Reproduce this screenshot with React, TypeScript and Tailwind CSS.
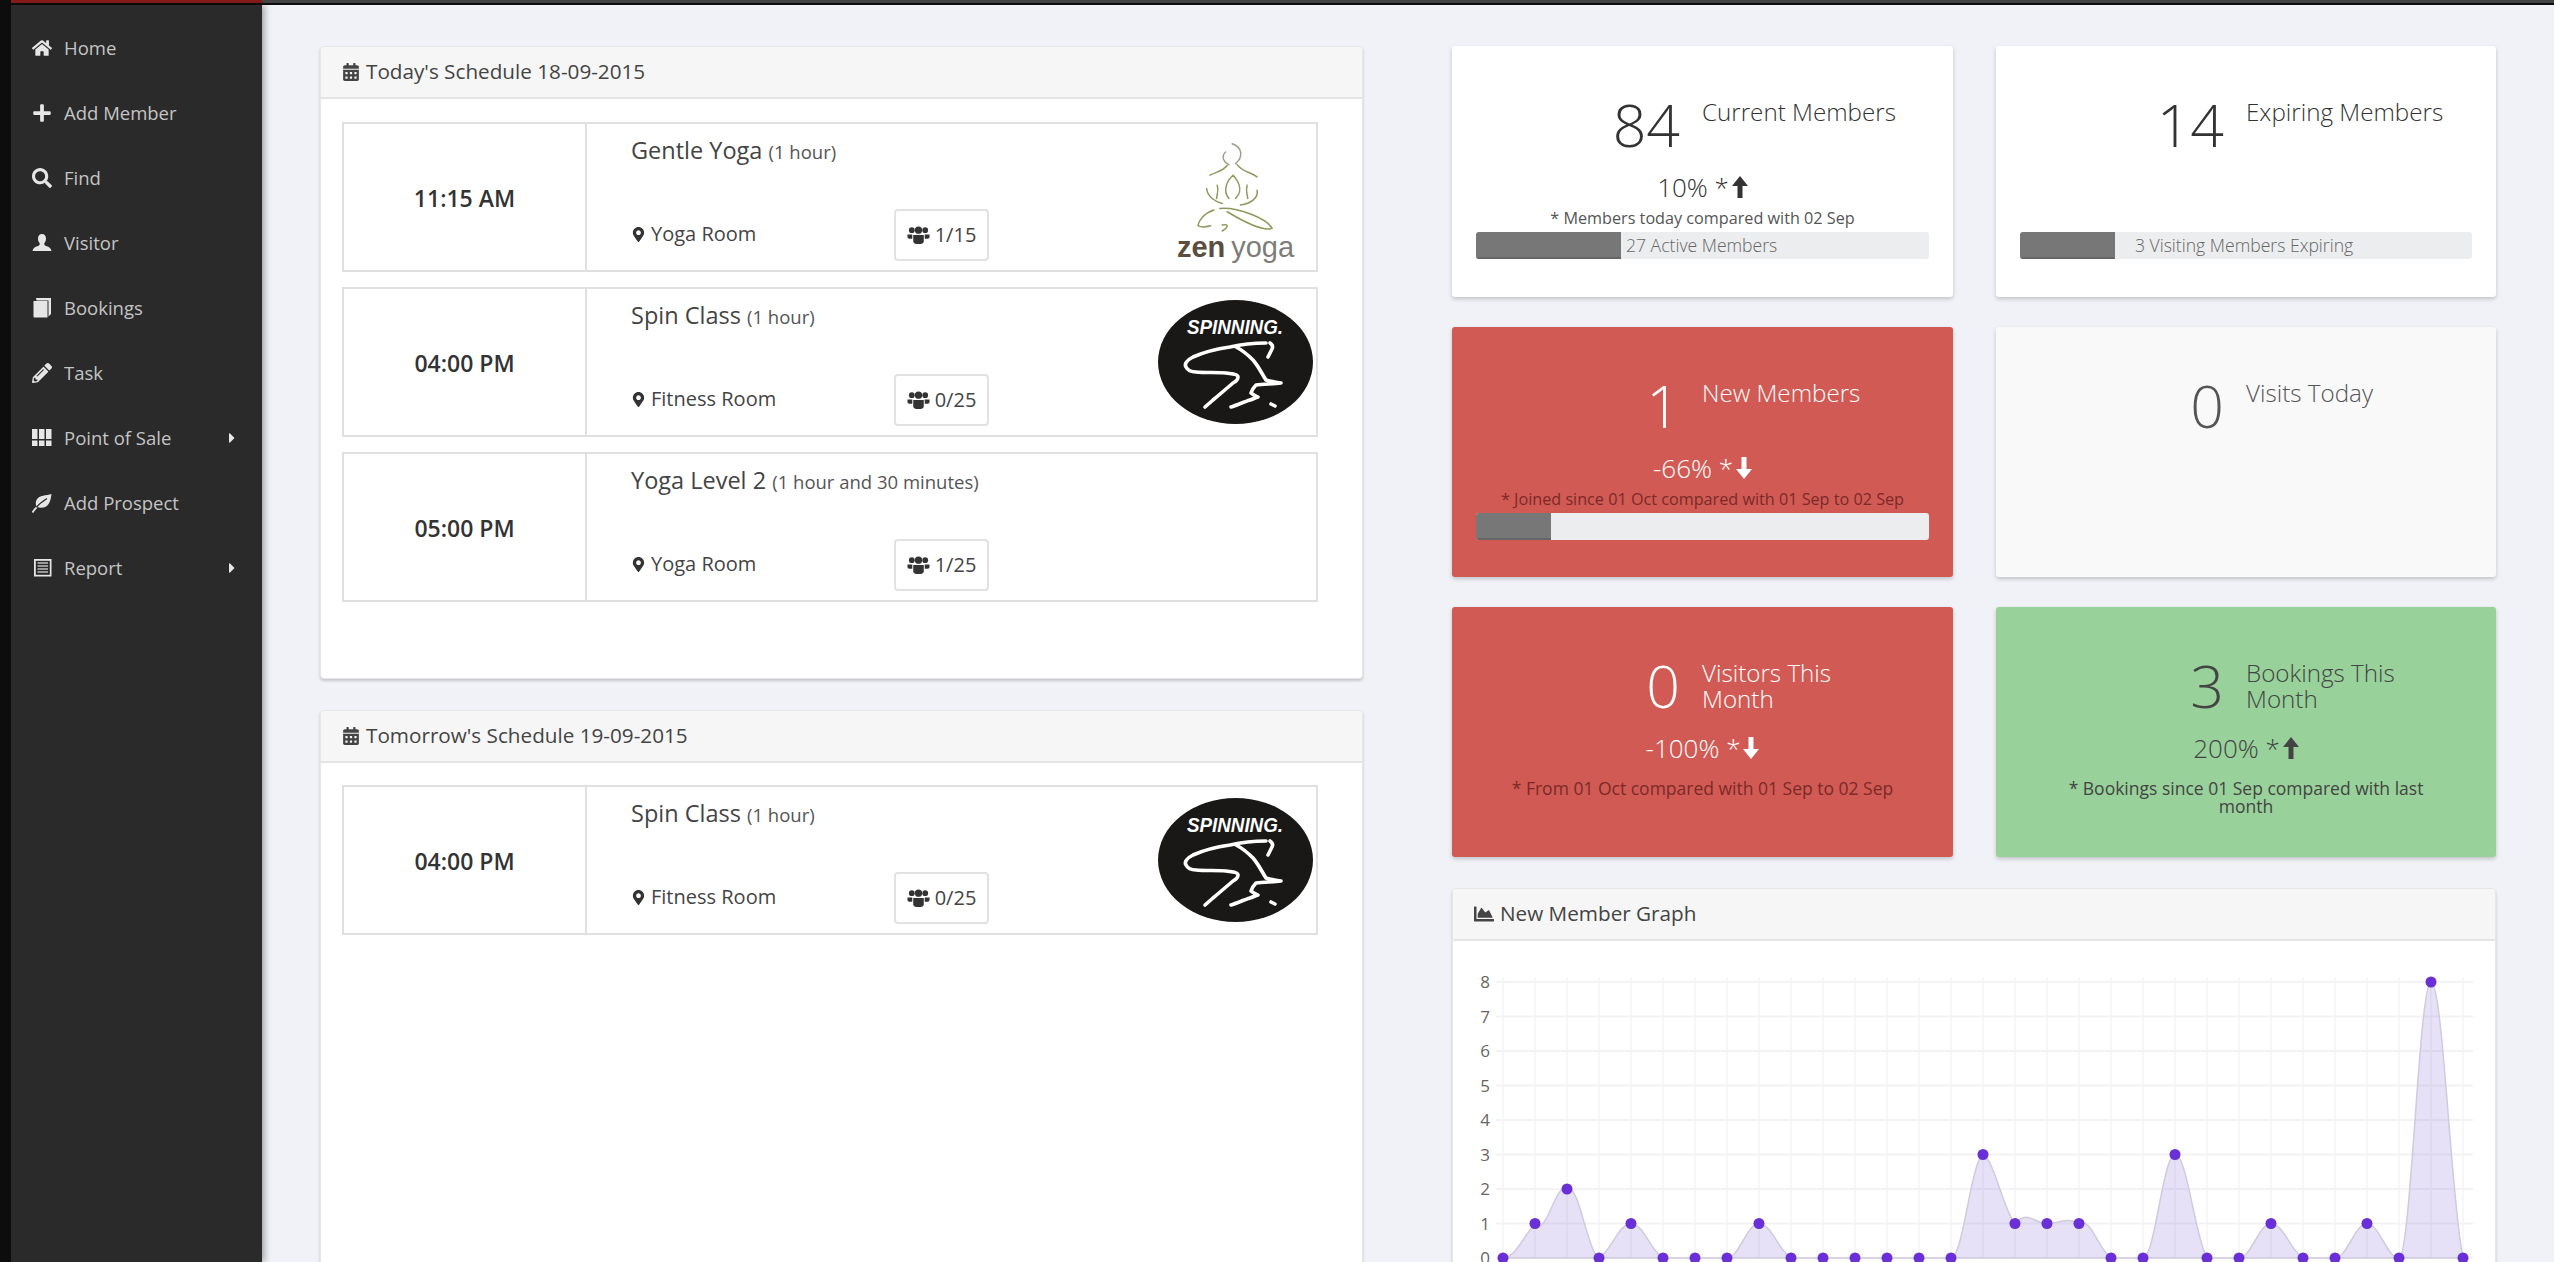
import type { ReactNode } from "react";
import { FaCalendarAlt, FaCaretRight, FaChartArea, FaHome, FaMapMarkerAlt, FaPencilAlt, FaPlus, FaSearch } from "react-icons/fa";

function UserIcon() {
  return (
    <svg viewBox="0 0 20 20" className="h-[20px] w-[20px] fill-current">
      <path d="M10 1C7.4 1 6 3 6 5.6 6 8 7 9.6 7.8 10.4 7.8 12 7 12.6 5 13.3 2.6 14.2 1 15.2 0.5 18H19.5C19 15.2 17.4 14.2 15 13.3 13 12.6 12.2 12 12.2 10.4 13 9.6 14 8 14 5.6 14 3 12.6 1 10 1Z" />
    </svg>
  );
}

function BookIcon() {
  return (
    <svg viewBox="0 0 20 20" className="h-[20px] w-[20px] fill-current">
      <path d="M4 0H19V16L16.5 18.5V2.5H4.5Z" />
      <path d="M1.5 3H15.5V19.5H2.5C1.9 19.5 1.5 19 1.5 18.5Z" />
    </svg>
  );
}

function GridIcon() {
  return (
    <svg viewBox="0 0 20 20" className="h-[20px] w-[20px] fill-current">
      <path d="M0 1H5.5V11H0ZM7 1H12.5V11H7ZM14 1H19.5V11H14ZM0 12.5H5.5V18H0ZM7 12.5H12.5V18H7ZM14 12.5H19.5V18H14Z" />
    </svg>
  );
}

function LeafIcon() {
  return (
    <svg viewBox="0 0 20 20" className="h-[20px] w-[20px]">
      <path d="M19.5 1C14 3 7.5 1.5 4.5 7 3.4 9.4 3.6 12 4.8 14 9 15.5 14 15 16.6 11 18.6 8 19 4.5 19.5 1Z" fill="currentColor" />
      <path d="M0.5 19C4 14 9 9 15 5.5" fill="none" stroke="#2a2a2a" strokeWidth="1.2" />
      <path d="M0.5 19.5C1.5 17.5 3 16 4.5 14.4" fill="none" stroke="currentColor" strokeWidth="1.8" />
    </svg>
  );
}

function ListIcon() {
  return (
    <svg viewBox="0 0 20 20" className="h-[20px] w-[20px]">
      <rect x="2" y="1" width="17.5" height="17.5" fill="currentColor" />
      <rect x="3.8" y="2.8" width="14" height="14" fill="#2a2a2a" />
      <path d="M5.5 5H16M5.5 8H16M5.5 11H16M5.5 14H16" stroke="#bdbdbd" strokeWidth="1.6" />
    </svg>
  );
}

function UsersIcon() {
  return (
    <svg viewBox="0 0 24 20" className="h-[20px] w-[23px] fill-[#333]">
      <circle cx="5" cy="5" r="3" />
      <circle cx="19" cy="5" r="3" />
      <circle cx="12" cy="5" r="3.8" />
      <path d="M0.5 9.5H5.5V14H3C1.5 14 0.5 13 0.5 12ZM18.5 9.5H23.5V12C23.5 13 22.5 14 21 14H18.5Z" />
      <path d="M6.5 10H17.5V16.5C17.5 18.5 15.5 19.5 12 19.5 8.5 19.5 6.5 18.5 6.5 16.5Z" />
    </svg>
  );
}

const NAV = [
  { label: "Home", icon: <FaHome /> },
  { label: "Add Member", icon: <FaPlus /> },
  { label: "Find", icon: <FaSearch /> },
  { label: "Visitor", icon: <UserIcon /> },
  { label: "Bookings", icon: <BookIcon /> },
  { label: "Task", icon: <FaPencilAlt /> },
  { label: "Point of Sale", icon: <GridIcon />, sub: true },
  { label: "Add Prospect", icon: <LeafIcon /> },
  { label: "Report", icon: <ListIcon />, sub: true },
];

const VALUES = [0, 1, 2, 0, 1, 0, 0, 0, 1, 0, 0, 0, 0, 0, 0, 3, 1, 1, 1, 0, 0, 3, 0, 0, 1, 0, 0, 1, 0, 8, 0];

function Arrow({ up }: { up?: boolean }) {
  return (
    <svg viewBox="0 0 16 22" className={`inline-block h-[22px] w-[16px] fill-current ${up ? "" : "rotate-180"}`}>
      <path d="M8 0 16 10H10.5V22H5.5V10H0Z" />
    </svg>
  );
}

function ZenLogo() {
  return (
    <div className="flex h-full flex-col items-center pt-[16px]">
      <svg viewBox="200 55 250 290" className="h-[97px] w-[83px] fill-none stroke-[#8b9a5a] [stroke-linecap:round] [stroke-width:4.5]">
        <path d="M315 65C345 75 350 105 325 125M295 90C280 105 290 120 305 128" stroke="#9aa08a" />
        <path d="M300 130C285 150 265 150 248 160M330 128C345 150 370 150 390 165" />
        <path d="M238 200C240 225 265 240 285 245M390 205C395 230 370 245 340 250" />
        <path d="M318 160C300 175 285 205 305 230M318 160C335 180 350 205 325 230M270 190C275 205 270 215 268 230M360 190C355 205 360 215 362 230" />
        <path d="M278 260C330 255 420 290 435 320C410 330 350 300 300 270" />
        <path d="M260 265C230 275 215 295 212 312C225 320 240 315 250 312M285 310C310 305 300 320 285 328" />
      </svg>
      <div className="mt-[-5px] text-[29px] leading-[30px] font-['Liberation_Sans',sans-serif]">
        <span className="font-bold text-[#5a4e3e]">zen</span>
        <span className="ml-[6px] text-[#7d7d78]">yoga</span>
      </div>
    </div>
  );
}

function SpinningLogo() {
  return (
    <div className="flex h-full items-center">
      <svg viewBox="0 0 155 124" className="h-[124px] w-[155px]">
        <ellipse cx="77.5" cy="62" rx="77.5" ry="62" fill="#1a1817" />
        <text x="29" y="34" fill="#fff" fontFamily="Liberation Sans" fontSize="21" fontStyle="italic" fontWeight="700" textLength="96" lengthAdjust="spacingAndGlyphs">
          SPINNING.
        </text>
        <g fill="none" stroke="#fff" strokeWidth="3.6" strokeLinecap="round" strokeLinejoin="round">
          <path d="M108 43C95 43 85 44 72 47C58 49 46 52 35 57C29 60 26 64 28 67C30 71 34 72 38 72C48 73 58 72 68 73C74 74 80 74 80 77C80 80 77 82 75 83C68 89 61 95 55 100L47 107" />
          <path d="M78 47C84 50 90 55 95 60C101 67 104 74 108 80C113 82 118 82 123 83C114 84 106 84 98 85C95 88 94 90 93 93C95 95 98 96 100 97C97 98 95 99 92 100C86 102 79 105 73 107" />
          <path d="M112 43C115 45 115 47 114 49L110 57" />
          <path d="M113 104 117 106" />
        </g>
      </svg>
    </div>
  );
}

function ScheduleRow({
  time,
  title,
  duration,
  room,
  count,
  logo,
}: {
  time: string;
  title: string;
  duration: string;
  room: string;
  count: string;
  logo?: ReactNode;
}) {
  return (
    <div className="flex h-[150px] border-2 border-[#e0e0e0] bg-white text-[#333]">
      <div className="flex w-[243px] shrink-0 items-center justify-center border-r-2 border-[#e0e0e0] pt-[2px] text-[23px] font-semibold">{time}</div>
      <div className="flex flex-1 flex-col justify-between pb-[9px] pl-[44px] pt-[11px]">
        <div className="text-[23.5px] leading-[30px] text-[#444]">
          {title} <span className="text-[18.5px] text-[#555]">({duration})</span>
        </div>
        <div className="flex items-center">
          <div className="-mt-[2px] flex w-[263px] items-center gap-[5px] text-[20px] text-[#444]">
            <FaMapMarkerAlt className="text-[15px] text-[#333]" />
            {room}
          </div>
          <div className="flex h-[52px] w-[95px] items-center justify-center gap-[5px] rounded-[4px] border-2 border-[#e2e2e2] text-[20px] text-[#444]">
            <UsersIcon />
            {count}
          </div>
        </div>
      </div>
      <div className="mr-[3px] w-[155px] shrink-0">{logo}</div>
    </div>
  );
}

function Panel({ icon, title, className, children }: { icon: ReactNode; title: string; className?: string; children: ReactNode }) {
  return (
    <section className={`shrink-0 rounded-[4px] border border-[#e6e6e8] bg-white shadow-[0_2px_3px_rgba(0,0,0,0.18)] ${className ?? ""}`}>
      <header className="flex h-[52px] items-center gap-[6px] rounded-t-[4px] border-b-2 border-[#e4e4e4] bg-[#f6f6f6] pl-[21px] text-[20.7px] text-[#444]">
        {icon}
        {title}
      </header>
      {children}
    </section>
  );
}

function StatCard({
  value,
  label,
  pct,
  up,
  note,
  bar,
  barText,
  textOffset,
  tone,
  noteClass,
  height,
}: {
  value: string;
  label: string;
  pct?: string;
  up?: boolean;
  note?: string;
  bar?: string;
  barText?: string;
  textOffset?: string;
  tone: string;
  noteClass?: string;
  height?: string;
}) {
  return (
    <div className={`flex flex-col items-center rounded-[3px] px-[24px] pt-[36px] shadow-[0_2px_4px_rgba(0,0,0,0.2)] ${height ?? "h-[250px]"} ${tone}`}>
      <div className="flex h-[84px] w-full">
        <div className="w-[204px] shrink-0 text-right text-[59px] font-light leading-[84px]">{value}</div>
        <div className="ml-[22px] max-w-[204px] pt-[17px] text-[24.2px] font-light leading-[26px]">{label}</div>
      </div>
      <div className={`mt-[1px] flex h-[40px] items-center gap-[3px] text-[26px] font-light ${pct ? "" : "invisible"}`}>
        {pct} * <Arrow up={up} />
      </div>
      <div className={`text-center leading-[18px] ${noteClass ?? "mt-[2px] text-[16.2px] text-[#555]"}`}>{note ?? "\u00a0"}</div>
      {bar && (
        <div className="mt-[5px] flex h-[27px] w-full items-center overflow-hidden rounded-[3px] bg-[#ebedef] text-[17.6px] font-light text-[#666]">
          <div className={`h-full shrink-0 bg-[#777] shadow-[inset_0_-2px_0_rgba(0,0,0,0.15)] ${bar}`} />
          <span className={textOffset}>{barText}</span>
        </div>
      )}
    </div>
  );
}

function Chart() {
  const x = (i: number) => 50 + i * 32;
  const y = (v: number) => 41 + (8 - v) * 34.5;
  const base = y(0);
  let line = `M${x(0)} ${base}`;
  VALUES.forEach((v, i) => {
    if (i === 0) return;
    const prev = VALUES[i - 1];
    if (v === 0 && prev === 0) {
      line += `L${x(i)} ${base}`;
      return;
    }
    const before = VALUES[Math.max(i - 2, 0)];
    const after = VALUES[Math.min(i + 1, VALUES.length - 1)];
    const c1 = Math.min(y(prev) - (y(v) - y(before)) * 0.2, base);
    const c2 = Math.min(y(v) + (y(after) - y(prev)) * -0.2, base);
    line += `C${x(i - 1) + 12} ${c1} ${x(i) - 12} ${c2} ${x(i)} ${y(v)}`;
  });
  return (
    <svg viewBox="0 0 1042 340" className="h-[340px] w-full">
      {[8, 7, 6, 5, 4, 3, 2, 1, 0].map((v) => (
        <g key={v}>
          <line x1="43" x2="1020" y1={y(v)} y2={y(v)} stroke="#f3f3f5" strokeWidth="2" />
          <text x="32" y={y(v) + 6} textAnchor="middle" fontSize="17" fill="#666" fontFamily="Open Sans">
            {v}
          </text>
        </g>
      ))}
      {VALUES.map((_, i) => (
        <line key={i} x1={x(i)} x2={x(i)} y1="36" y2={base} stroke="#f4f4f6" strokeWidth="1.5" />
      ))}
      <path d={`${line}L${x(30)} ${base}Z`} fill="#6a4fc8" fillOpacity="0.17" stroke="#cfcbdc" strokeWidth="1.5" />
      {VALUES.map((v, i) => (
        <circle key={i} cx={x(i)} cy={y(v)} r="5.5" fill="#6a2fd6" />
      ))}
    </svg>
  );
}

export default function App() {
  return (
    <div className="flex h-[1262px] flex-col overflow-hidden bg-[#f1f2f7] font-['Open_Sans',sans-serif]">
      <div className="flex h-[5px] shrink-0 flex-col bg-[#0d0d0d]">
        <div className="flex h-[3px] bg-[#444]">
          <div className="w-[11px] bg-[#0d0d0d]" />
          <div className="w-[251px] bg-[#8c1a1a]" />
        </div>
      </div>
      <div className="flex min-h-0 flex-1">
        <div className="w-[11px] shrink-0 bg-[#0d0d0d]" />
        <nav className="w-[251px] shrink-0 bg-[#2a2a2a] pt-[10px] shadow-[3px_0_6px_rgba(0,0,0,0.3)]">
          {NAV.map((item) => (
            <div key={item.label} className="flex h-[65px] items-center pl-[21px] pr-[22px] text-[18.5px] text-[#c4c4c4]">
              <span className="flex w-[32px] shrink-0 text-[20px] text-[#e6e6e6]">{item.icon}</span>
              <span className="flex-1">{item.label}</span>
              {item.sub && <FaCaretRight className="text-[16px] text-[#e6e6e6]" />}
            </div>
          ))}
        </nav>

        <main className="flex min-w-0 flex-1 pl-[58px] pt-[41px]">
          <div className="flex w-[1043px] shrink-0 flex-col gap-[31px]">
            <Panel icon={<FaCalendarAlt className="text-[18px]" />} title="Today's Schedule 18-09-2015" className="h-[633px]">
              <div className="ml-[21px] mt-[23px] flex w-[976px] flex-col gap-[15px]">
                <ScheduleRow time="11:15 AM" title="Gentle Yoga" duration="1 hour" room="Yoga Room" count="1/15" logo={<ZenLogo />} />
                <ScheduleRow time="04:00 PM" title="Spin Class" duration="1 hour" room="Fitness Room" count="0/25" logo={<SpinningLogo />} />
                <ScheduleRow time="05:00 PM" title="Yoga Level 2" duration="1 hour and 30 minutes" room="Yoga Room" count="1/25" />
              </div>
            </Panel>
            <Panel icon={<FaCalendarAlt className="text-[18px]" />} title="Tomorrow's Schedule 19-09-2015" className="h-[600px]">
              <div className="ml-[21px] mt-[22px] w-[976px]">
                <ScheduleRow time="04:00 PM" title="Spin Class" duration="1 hour" room="Fitness Room" count="0/25" logo={<SpinningLogo />} />
              </div>
            </Panel>
          </div>

          <div className="ml-[89px] w-[1044px] shrink-0">
            <div className="grid grid-cols-[501px_500px] gap-x-[43px] gap-y-[30px]">
              <StatCard tone="bg-white text-[#333]" height="h-[251px]" value="84" label="Current Members" pct="10%" up note="* Members today compared with 02 Sep" bar="w-[32%]" barText="27 Active Members" textOffset="ml-[5px]" />
              <StatCard tone="bg-white text-[#333]" height="h-[251px]" value="14" label="Expiring Members" bar="w-[21%]" barText="3 Visiting Members Expiring" textOffset="ml-[20px]" />
              <StatCard tone="bg-[#d15a54] text-white" value="1" label="New Members" pct="-66%" note="* Joined since 01 Oct compared with 01 Sep to 02 Sep" noteClass="mt-[2px] text-[16.2px] text-[#7a2a28]" bar="w-[16.5%]" />
              <StatCard tone="bg-[#f9f9f9] text-[#555]" value="0" label="Visits Today" />
              <StatCard tone="bg-[#d15a54] text-white" value="0" label="Visitors This Month" pct="-100%" note="* From 01 Oct compared with 01 Sep to 02 Sep" noteClass="mt-[11px] text-[17.5px] text-[#7a2a28]" />
              <StatCard tone="bg-[#98d19a] text-[#444]" value="3" label="Bookings This Month" pct="200%" up note="* Bookings since 01 Sep compared with last month" noteClass="mt-[11px] max-w-[390px] text-[17.5px]" />
            </div>
            <Panel icon={<FaChartArea className="text-[20px]" />} title="New Member Graph" className="mt-[31px] h-[500px]">
              <Chart />
            </Panel>
          </div>
        </main>
      </div>
    </div>
  );
}
